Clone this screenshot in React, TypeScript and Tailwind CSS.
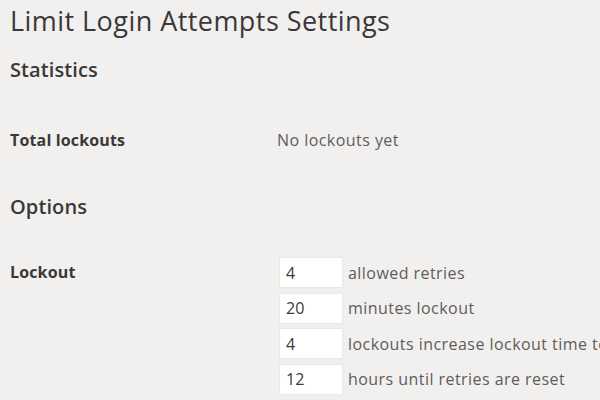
export default function App() {
  const lockoutRows = [
    { value: '4', label: 'allowed retries' },
    { value: '20', label: 'minutes lockout' },
    { value: '4', label: 'lockouts increase lockout time to' },
    { value: '12', label: 'hours until retries are reset' },
  ]

  return (
    <div
      className="h-[400px] w-[600px] overflow-hidden bg-[#f1f0ee] text-[#3a3838]"
      style={{ fontFamily: '"Open Sans", "Noto Sans", sans-serif' }}
    >
      <div className="pl-[10px] pt-[3px]">
        <h1 className="whitespace-nowrap text-[27px] leading-[36px] tracking-[0.45px] font-normal text-[#3a3838]">
          Limit Login Attempts Settings
        </h1>

        <h2 className="mt-[17px] text-[20px] leading-[28px] tracking-[0.1px] font-semibold">Statistics</h2>

        {/* Statistics table */}
        <div className="mt-[45px] flex items-center text-[16px] leading-[22px]">
          <div className="w-[267px] shrink-0 font-bold tracking-[0.15px]">Total lockouts</div>
          <div className="tracking-[0.45px] text-[#5e5c5c]">No lockouts yet</div>
        </div>

        <h2 className="mt-[42px] text-[20px] leading-[28px] tracking-[0.1px] font-semibold">Options</h2>

        {/* Options table */}
        <div className="mt-[37px] flex text-[16px] leading-[22px]">
          <div className="w-[270px] shrink-0 pt-[3px] font-bold tracking-[0.15px]">Lockout</div>
          <div className="flex flex-col gap-[6.5px]">
            {lockoutRows.map((row, i) => (
              <div key={i} className="flex items-center whitespace-nowrap">
                <div className="flex h-[29px] w-[62px] shrink-0 items-center bg-white pl-[6px] text-[#3a3838] shadow-[0_0_0_1px_#e9e8e6]">
                  {row.value}
                </div>
                <span className="ml-[6px] tracking-[0.45px] text-[#5e5c5c]">{row.label}</span>
              </div>
            ))}
          </div>
        </div>
      </div>
    </div>
  )
}
